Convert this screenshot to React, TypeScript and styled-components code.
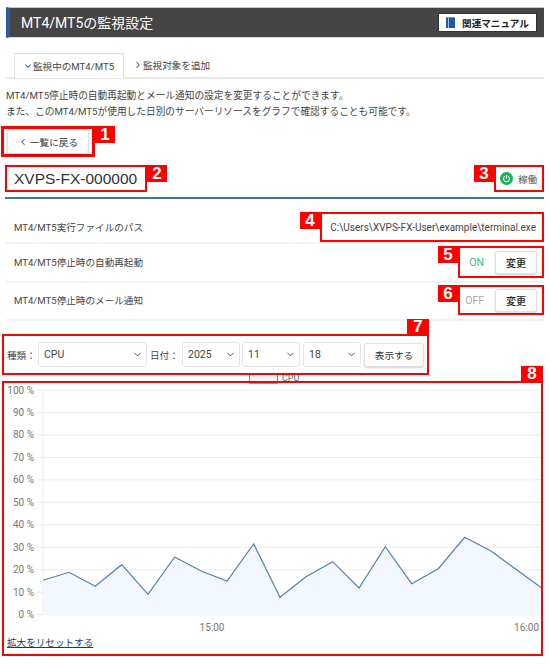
import React from "react";
import styled, { createGlobalStyle } from "styled-components";
import { ChevronDown, ChevronLeft, ChevronRight } from "lucide-react";

const Global = createGlobalStyle`
  html, body { margin: 0; padding: 0; background: #fff; }
  body { font-family: Roboto, "Noto Sans CJK JP", "Liberation Sans", sans-serif; color: #444; }
  * { box-sizing: border-box; }
`;

const Page = styled.div`
  width: 550px;
  height: 666px;
  overflow: hidden;
  padding-top: 7px;
`;

const Header = styled.header`
  margin: 0 6px;
  height: 31px;
  display: flex;
  align-items: center;
  justify-content: space-between;
  background: #454545;
  border-left: 4px solid #2b5c9e;
  border-top: 1px solid #c4c4c4;
  border-bottom: 1px solid #d8d8d8;
  padding: 0 7px 0 11px;
`;

const Title = styled.h1`
  margin: 0;
  font-size: 14px;
  font-weight: 400;
  line-height: 20px;
  color: #fff;
`;

const ManualButton = styled.a`
  width: 99px;
  height: 19px;
  display: flex;
  align-items: center;
  justify-content: center;
  gap: 6px;
  background: #fff;
  font-size: 9.6px;
  font-weight: 700;
  color: #222;
  border: 1px solid #333;
`;

const Tabs = styled.nav`
  margin: 15px 6px 0;
  height: 26px;
  display: flex;
  padding-left: 8px;
  border-bottom: 2px solid #e8e8e8;
`;

const Tab = styled.div<{ $active?: boolean }>`
  width: ${(p) => (p.$active ? "110px" : "auto")};
  height: ${(p) => (p.$active ? "25px" : "24px")};
  display: flex;
  align-items: center;
  padding-left: ${(p) => (p.$active ? "8px" : "9px")};
  font-size: 9.6px;
  color: #444;
  background: #fff;
  border: ${(p) => (p.$active ? "1px solid #e0e0e0" : "none")};
  border-bottom: none;
  svg { color: #2b5c9e; flex: none; }
`;

const Intro = styled.p`
  margin: 9px 6px 0;
  font-size: 9.7px;
  line-height: 16px;
  color: #444;
`;

const Marked = styled.div`
  --mark: 2px;
  position: relative;
  border: var(--mark) solid #f00;
  background: #fff;
`;

const Badge = styled.span<{ $side: "right" | "left" | "top" }>`
  position: absolute;
  width: 20px;
  height: 17px;
  display: flex;
  align-items: center;
  justify-content: center;
  background: #f00;
  color: #fff;
  font-family: "Liberation Sans", sans-serif;
  font-size: 17px;
  font-weight: 700;
  ${(p) =>
    p.$side === "right"
      ? "left: calc(100% + var(--mark)); top: calc(var(--mark) * -1);"
      : p.$side === "left"
        ? "right: calc(100% + var(--mark)); top: calc(var(--mark) * -1);"
        : "right: calc(var(--mark) * -1); bottom: calc(100% + var(--mark)); width: 22px; height: 15px;"}
`;

const BackBox = styled(Marked)`
  --mark: 3px;
  width: 94px;
  height: 31px;
  margin: 6px 0 0 1px;
  padding: 0 3px;
  display: flex;
  align-items: center;
`;

const GhostButton = styled.button`
  display: flex;
  align-items: center;
  justify-content: center;
  background: #fff;
  border: 1px solid #e0e0e0;
  border-radius: 3px;
  box-shadow: 0 1px 2px rgba(0, 0, 0, 0.18);
  color: #333;
  font-family: inherit;
  font-size: 9.6px;
  padding: 0;
`;

const BackButton = styled(GhostButton)`
  width: 82px;
  height: 25px;
  gap: 2px;
  svg { color: #2b5c9e; }
`;

const ServerRow = styled.div`
  margin: 8px 6px 0 5px;
  display: flex;
  justify-content: space-between;
  padding-bottom: 5px;
  border-bottom: 2px solid #3f75ad;
`;

const NameBox = styled(Marked)`
  height: 27px;
  width: 142px;
  display: flex;
  align-items: center;
  padding-left: 7px;
  font-family: "Liberation Sans", sans-serif;
  font-size: 15.5px;
  color: #333;
`;

const StatusBox = styled(Marked)`
  height: 27px;
  width: 50px;
  display: flex;
  align-items: center;
  gap: 5px;
  padding-left: 4px;
  font-size: 9.6px;
  color: #555;
`;

const SettingRow = styled.div<{ $top: number; $bottom: number }>`
  margin: 0 6px;
  padding: ${(p) => p.$top}px 0 ${(p) => p.$bottom}px 8px;
  display: flex;
  align-items: center;
  justify-content: space-between;
  border-bottom: 2px solid #f2f2f2;
`;

const SettingLabel = styled.span`
  font-size: 9.6px;
  color: #444;
`;

const PathBox = styled(Marked)`
  width: 224px;
  height: 30px;
  display: flex;
  align-items: center;
  justify-content: flex-end;
  padding-right: 6px;
  font-size: 10px;
  color: #444;
  white-space: nowrap;
`;

const ToggleBox = styled(Marked)<{ $height: number }>`
  width: 86px;
  height: ${(p) => p.$height}px;
  display: flex;
  align-items: center;
  justify-content: space-between;
  padding: 0 5px 0 0;
`;

const ToggleState = styled.span<{ $on?: boolean }>`
  width: 24px;
  text-align: right;
  font-size: 10.5px;
  color: ${(p) => (p.$on ? "#2ebd7e" : "#a8a8a8")};
`;

const ChangeButton = styled(GhostButton)`
  width: 42px;
  height: 23px;
  font-size: 10px;
  font-weight: 500;
  color: #222;
`;

const FilterBox = styled(Marked)`
  margin: 13px 0 0 2px;
  width: 427px;
  height: 41px;
  display: flex;
  align-items: center;
  padding: 0 0 0 3px;
  font-size: 9.6px;
`;

const FieldLabel = styled.span<{ $width: number }>`
  width: ${(p) => p.$width}px;
  flex: none;
  white-space: nowrap;
  color: #444;
`;

const SelectWrap = styled.div<{ $width: number; $gap: number }>`
  position: relative;
  width: ${(p) => p.$width}px;
  margin-right: ${(p) => p.$gap}px;
  flex: none;
  svg {
    position: absolute;
    right: 4px;
    top: 7px;
    color: #444;
    pointer-events: none;
  }
`;

const Select = styled.select`
  width: 100%;
  height: 25px;
  appearance: none;
  background: #fff;
  border: 1px solid #e4e4e4;
  border-radius: 3px;
  padding: 0 5px;
  font-family: inherit;
  font-size: 10.5px;
  color: #444;
`;

const ShowButton = styled(GhostButton)`
  width: 60px;
  height: 24px;
`;

const LegendStrip = styled.div`
  height: 6px;
  margin-left: 249px;
  display: flex;
  align-items: center;
  gap: 4px;
  font-size: 9px;
  line-height: 6px;
  color: #666;
`;

const LegendSwatch = styled.span`
  width: 29px;
  height: 12px;
  flex: none;
  background: #eef4fc;
  border: 1px solid #5b8cc4;
`;

const ChartBox = styled(Marked)`
  margin-left: 2px;
  width: 541px;
  height: 275px;
`;

const ChartSvg = styled.svg`
  display: block;
  width: 537px;
  height: 252px;
`;

const ResetLink = styled.a`
  display: block;
  margin: 0 0 0 3px;
  font-size: 9.6px;
  line-height: 16px;
  color: #1d3c5c;
  text-decoration: underline;
`;

const BookIcon = () => (
  <svg width="10" height="11" viewBox="0 0 10 11" aria-hidden="true">
    <rect x="0" y="0" width="9" height="11" fill="#1f5aa0" />
    <rect x="2" y="0" width="1" height="11" fill="#9cc0e6" />
    <rect x="0" y="0" width="9" height="1" fill="#6f9fd2" />
  </svg>
);

const PowerIcon = () => (
  <svg width="13" height="13" viewBox="0 0 13 13" aria-hidden="true">
    <circle cx="6.5" cy="6.5" r="6.5" fill="#12b55a" />
    <path d="M4.4 4.6a3 3 0 1 0 4.2 0" fill="none" stroke="#fff" strokeWidth="1.1" strokeLinecap="round" />
    <path d="M6.5 3.2v3" fill="none" stroke="#fff" strokeWidth="1.1" strokeLinecap="round" />
  </svg>
);

const points: [number, number][] = [
  [43, 581.3], [69, 573.3], [95.3, 587.3], [121.7, 565.7], [148, 595.3],
  [174.7, 558], [201, 572], [227, 582], [253.7, 545], [280, 598.3],
  [306, 577.7], [332.7, 562.7], [359, 589], [385.3, 547.7], [411.7, 584.7],
  [438.3, 569.7], [464.7, 538.3], [491, 552], [517, 571], [541, 588.5],
];

const ticks = [100, 90, 80, 70, 60, 50, 40, 30, 20, 10, 0];
const tickY = (v: number) => 615.7 - (v / 100) * 224.7;

const Chart = () => {
  const line = points.map(([x, y]) => `${x},${y}`).join(" ");
  return (
    <ChartSvg viewBox="4 384 537 252" role="img" aria-label="CPU">
      <rect x="249" y="384" width="29" height="1" fill="#7ea6d6" />
      <line x1="43" y1="391" x2="43" y2="616" stroke="#f0f0f0" strokeWidth="1.5" />
      {ticks.map((t) => (
        <g key={t}>
          <line x1="37" y1={tickY(t)} x2="541" y2={tickY(t)} stroke="#ebebeb" strokeWidth="1" />
          <text x="34" y={tickY(t) + 3.5} textAnchor="end" fontSize="10" fill="#777" fontFamily="Roboto, sans-serif">
            {t} %
          </text>
        </g>
      ))}
      <polygon points={`43,615.7 ${line} 541,615.7`} fill="#f3f8fe" />
      <polyline points={line} fill="none" stroke="#4f81b5" strokeWidth="1.2" />
      <text x="212" y="632" textAnchor="middle" fontSize="10" fill="#777" fontFamily="Roboto, sans-serif">15:00</text>
      <text x="539" y="632" textAnchor="end" fontSize="10" fill="#777" fontFamily="Roboto, sans-serif">16:00</text>
    </ChartSvg>
  );
};

export default function App() {
  return (
    <Page>
      <Global />
      <Header>
        <Title>MT4/MT5の監視設定</Title>
        <ManualButton>
          <BookIcon />
          関連マニュアル
        </ManualButton>
      </Header>
      <Tabs>
        <Tab $active>
          <ChevronDown size={10} strokeWidth={2.5} />
          監視中のMT4/MT5
        </Tab>
        <Tab>
          <ChevronRight size={10} strokeWidth={2.5} />
          監視対象を追加
        </Tab>
      </Tabs>
      <Intro>
        MT4/MT5停止時の自動再起動とメール通知の設定を変更することができます。
        <br />
        また、このMT4/MT5が使用した日別のサーバーリソースをグラフで確認することも可能です。
      </Intro>
      <BackBox>
        <BackButton>
          <ChevronLeft size={10} strokeWidth={2.5} />
          一覧に戻る
        </BackButton>
        <Badge $side="right">1</Badge>
      </BackBox>
      <ServerRow>
        <NameBox>
          XVPS-FX-000000
          <Badge $side="right">2</Badge>
        </NameBox>
        <StatusBox>
          <PowerIcon />
          稼働
          <Badge $side="left">3</Badge>
        </StatusBox>
      </ServerRow>
      <SettingRow $top={13} $bottom={0}>
        <SettingLabel>MT4/MT5実行ファイルのパス</SettingLabel>
        <PathBox>
          C:\Users\XVPS-FX-User\example\terminal.exe
          <Badge $side="left">4</Badge>
        </PathBox>
      </SettingRow>
      <SettingRow $top={2} $bottom={3}>
        <SettingLabel>MT4/MT5停止時の自動再起動</SettingLabel>
        <ToggleBox $height={32}>
          <ToggleState $on>ON</ToggleState>
          <ChangeButton>変更</ChangeButton>
          <Badge $side="left">5</Badge>
        </ToggleBox>
      </SettingRow>
      <SettingRow $top={2} $bottom={4}>
        <SettingLabel>MT4/MT5停止時のメール通知</SettingLabel>
        <ToggleBox $height={30}>
          <ToggleState>OFF</ToggleState>
          <ChangeButton>変更</ChangeButton>
          <Badge $side="left">6</Badge>
        </ToggleBox>
      </SettingRow>
      <FilterBox>
        <FieldLabel $width={31}>種類：</FieldLabel>
        <SelectWrap $width={109} $gap={3}>
          <Select defaultValue="CPU">
            <option>CPU</option>
          </Select>
          <ChevronDown size={11} strokeWidth={2} />
        </SelectWrap>
        <FieldLabel $width={32}>日付：</FieldLabel>
        <SelectWrap $width={58} $gap={2}>
          <Select defaultValue="2025">
            <option>2025</option>
          </Select>
          <ChevronDown size={11} strokeWidth={2} />
        </SelectWrap>
        <SelectWrap $width={58} $gap={3}>
          <Select defaultValue="11">
            <option>11</option>
          </Select>
          <ChevronDown size={11} strokeWidth={2} />
        </SelectWrap>
        <SelectWrap $width={58} $gap={3}>
          <Select defaultValue="18">
            <option>18</option>
          </Select>
          <ChevronDown size={11} strokeWidth={2} />
        </SelectWrap>
        <ShowButton>表示する</ShowButton>
        <Badge $side="top">7</Badge>
      </FilterBox>
      <LegendStrip>
        <LegendSwatch />
        CPU
      </LegendStrip>
      <ChartBox>
        <Chart />
        <ResetLink>拡大をリセットする</ResetLink>
        <Badge $side="top">8</Badge>
      </ChartBox>
    </Page>
  );
}
